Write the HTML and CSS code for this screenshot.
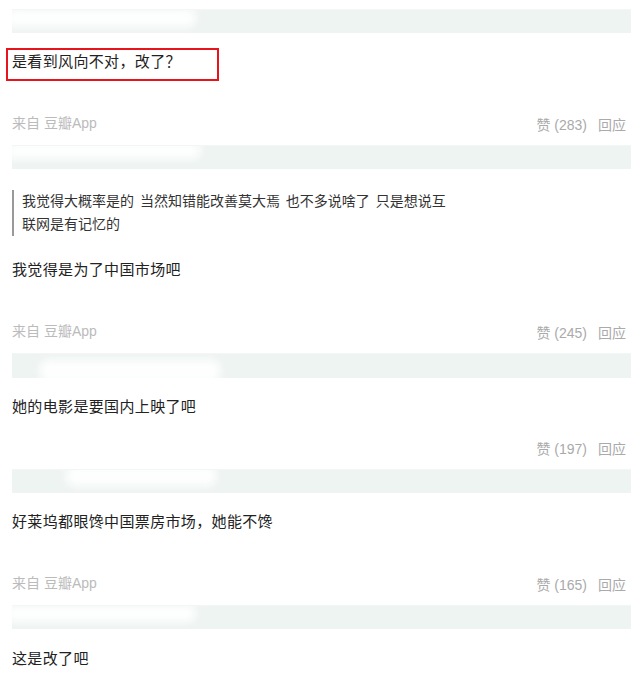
FILE: index.html
```html
<!DOCTYPE html>
<html lang="zh-CN">
<head>
<meta charset="utf-8">
<title>评论</title>
<link rel="stylesheet" href="styles.css">
</head>
<body>
<div class="page">
  <div class="comment">
    <div class="bar"><div class="smudge s1"></div></div>
    <div class="text highlighted">是看到风向不对，改了？<div class="mark"></div></div>
    <div class="meta">
      <span class="source">来自 豆瓣App</span>
      <span class="actions"><span class="vote">赞 (283)</span><a class="reply">回应</a></span>
    </div>
  </div>

  <div class="comment">
    <div class="bar"><div class="smudge s2"></div></div>
    <blockquote class="quote">我觉得大概率是的 当然知错能改善莫大焉 也不多说啥了 只是想说互联网是有记忆的</blockquote>
    <div class="text after-quote">我觉得是为了中国市场吧</div>
    <div class="meta">
      <span class="source">来自 豆瓣App</span>
      <span class="actions"><span class="vote">赞 (245)</span><a class="reply">回应</a></span>
    </div>
  </div>

  <div class="comment">
    <div class="bar tall"><div class="smudge s3"></div></div>
    <div class="text">她的电影是要国内上映了吧</div>
    <div class="meta no-source">
      <span class="source"></span>
      <span class="actions"><span class="vote">赞 (197)</span><a class="reply">回应</a></span>
    </div>
  </div>

  <div class="comment">
    <div class="bar"><div class="smudge s4"></div></div>
    <div class="text">好莱坞都眼馋中国票房市场，她能不馋</div>
    <div class="meta">
      <span class="source">来自 豆瓣App</span>
      <span class="actions"><span class="vote">赞 (165)</span><a class="reply">回应</a></span>
    </div>
  </div>

  <div class="comment">
    <div class="bar"><div class="smudge s5"></div></div>
    <div class="text last">这是改了吧</div>
  </div>
</div>
</body>
</html>
```

FILE: styles.css
```css
html, body {
  margin: 0;
  padding: 0;
  background: #ffffff;
}

body {
  font-family: "Liberation Sans", "Noto Sans CJK SC", sans-serif;
  color: #222;
}

.page {
  padding: 9px 10px 0 12px;
}

.bar {
  position: relative;
  height: 24px;
  background: #eef4f1;
  border-top: 1px solid #f3f6f5;
  box-sizing: border-box;
  overflow: hidden;
}

.bar.tall {
  height: 25px;
}

.smudge {
  position: absolute;
  background: #ffffff;
  border-radius: 8px;
  filter: blur(4px);
  opacity: 0.95;
}

.s1 { left: -6px; top: -1px; width: 190px; height: 18px; }
.s2 { left: -6px; top: -3px; width: 195px; height: 16px; }
.s3 { left: 28px; top: 6px; width: 180px; height: 22px; }
.s4 { left: 54px; top: -4px; width: 150px; height: 20px; }
.s5 { left: -6px; top: -1px; width: 190px; height: 17px; }

.text {
  position: relative;
  margin-top: 18px;
  font-size: 15px;
  letter-spacing: 0.35px;
  line-height: 22px;
  color: #222;
}

.text.after-quote {
  margin-top: 23px;
}

.text.last {
  margin-top: 19px;
}

.mark {
  position: absolute;
  left: -6px;
  top: -3px;
  width: 213px;
  height: 33px;
  border: 2px solid #e8141b;
  box-sizing: border-box;
}

.quote {
  margin: 21px 0 0 0;
  width: 432px;
  padding-left: 8px;
  border-left: 2px solid #999;
  font-size: 14px;
  line-height: 23px;
  color: #333;
  word-spacing: 2px;
}

.meta {
  display: flex;
  justify-content: space-between;
  align-items: flex-start;
  margin-top: 40px;
  margin-bottom: 8px;
  padding-right: 5px;
  font-size: 14px;
}

.meta.no-source {
  margin-top: 19px;
}

.source {
  line-height: 20px;
  color: #bbb;
}

.actions {
  line-height: 24px;
  color: #aaa;
}

.reply {
  margin-left: 11px;
  color: #aaa;
}
```
